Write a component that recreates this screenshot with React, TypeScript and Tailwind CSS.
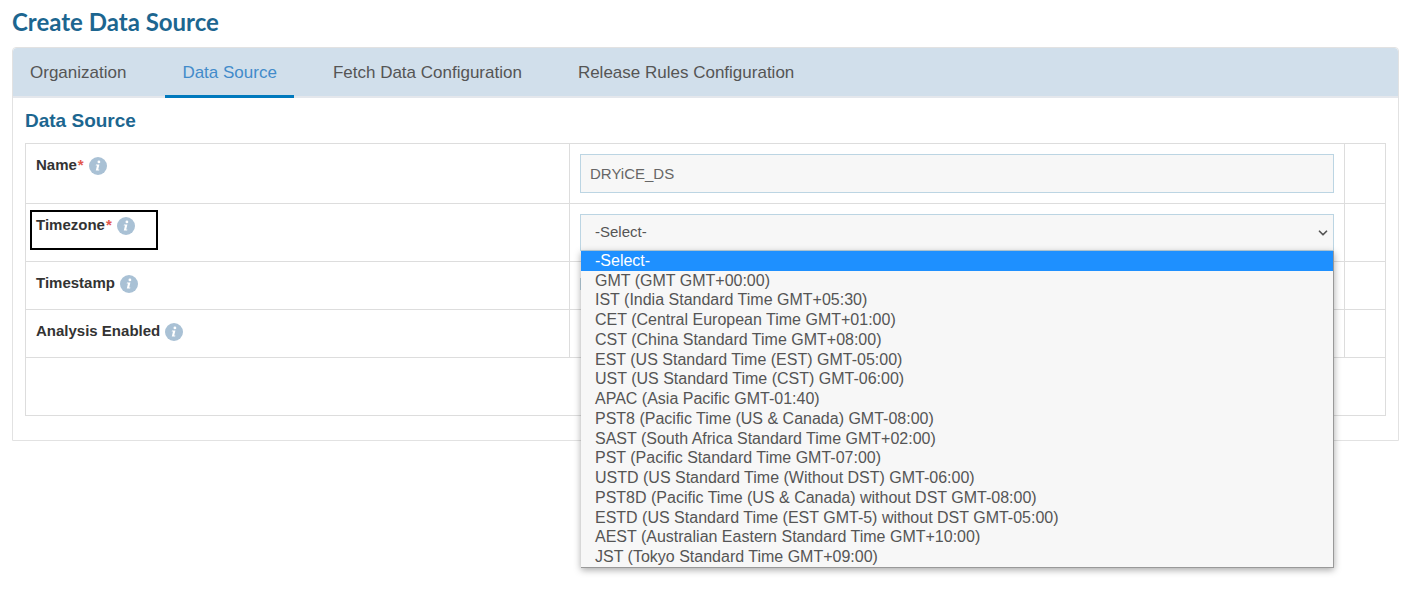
import { useState } from 'react'
import { ChevronDown } from 'lucide-react'

const tabs = [
  'Organization',
  'Data Source',
  'Fetch Data Configuration',
  'Release Rules Configuration'
]

const timezones = [
  '-Select-',
  'GMT (GMT GMT+00:00)',
  'IST (India Standard Time GMT+05:30)',
  'CET (Central European Time GMT+01:00)',
  'CST (China Standard Time GMT+08:00)',
  'EST (US Standard Time (EST) GMT-05:00)',
  'UST (US Standard Time (CST) GMT-06:00)',
  'APAC (Asia Pacific GMT-01:40)',
  'PST8 (Pacific Time (US & Canada) GMT-08:00)',
  'SAST (South Africa Standard Time GMT+02:00)',
  'PST (Pacific Standard Time GMT-07:00)',
  'USTD (US Standard Time (Without DST) GMT-06:00)',
  'PST8D (Pacific Time (US & Canada) without DST GMT-08:00)',
  'ESTD (US Standard Time (EST GMT-5) without DST GMT-05:00)',
  'AEST (Australian Eastern Standard Time GMT+10:00)',
  'JST (Tokyo Standard Time GMT+09:00)'
]

function InfoIcon() {
  return (
    <svg viewBox="0 0 18 18" className="mt-[3px] h-[18px] w-[18px] shrink-0" aria-hidden="true">
      <circle cx="9" cy="9" r="9" fill="#a9c1d5" />
      <circle cx="9.9" cy="4.9" r="1.4" fill="#fff" />
      <path d="M7 7.4h3.4l-1.2 5h1.2l-.3 1.2H6.8l1.2-5H6.7z" fill="#fff" />
    </svg>
  )
}

function FieldLabel({ htmlFor, text, required }: { htmlFor: string; text: string; required?: boolean }) {
  return (
    <div className="flex items-start gap-[5px]">
      <label htmlFor={htmlFor} className="pt-px text-[15px] leading-5 font-bold text-[#333]">
        {text}
        {required && <span className="ml-px text-[#e2574c]">*</span>}
      </label>
      <InfoIcon />
    </div>
  )
}

export default function App() {
  const [activeTab, setActiveTab] = useState('Data Source')
  const [name, setName] = useState('DRYiCE_DS')
  const [timezone, setTimezone] = useState('-Select-')

  return (
    <main className="min-h-screen bg-white pt-2 pr-[15px] pl-3 font-['Liberation_Sans',Arial,sans-serif] text-[#555]">
      <h1 className="font-[Lato,sans-serif] text-2xl leading-7 font-bold text-[#1c6690]">
        Create Data Source
      </h1>

      <section className="mt-[11px] rounded-t border border-[#e2e2e2]">
        <nav className="flex h-[50px] gap-[22px] rounded-t border-b-2 border-[#e4e7ec] bg-[#d1dfeb]">
          {tabs.map((tab) => (
            <button
              key={tab}
              type="button"
              onClick={() => setActiveTab(tab)}
              className={
                tab === activeTab
                  ? 'h-[50px] border-b-[3px] border-[#0079bd] px-[17px] pt-[2px] text-[17px] text-[#428bca]'
                  : 'h-[50px] border-b-[3px] border-transparent px-[17px] pt-[2px] text-[17px] text-[#555]'
              }
            >
              {tab}
            </button>
          ))}
        </nav>

        <div className="px-3 pt-[9px] pb-6">
          <h2 className="text-[19px] leading-7 font-bold text-[#1c6690]">Data Source</h2>

          <table className="mt-2 w-full table-fixed border-collapse border border-[#ddd] [&_td]:border [&_td]:border-[#ddd] [&_td]:p-[10px] [&_td]:align-top">
            <colgroup>
              <col className="w-[40%]" />
              <col className="w-[57%]" />
              <col className="w-[3%]" />
            </colgroup>
            <tbody>
              <tr>
                <td>
                  <FieldLabel htmlFor="name" text="Name" required />
                </td>
                <td>
                  <input
                    id="name"
                    type="text"
                    value={name}
                    onChange={(e) => setName(e.target.value)}
                    className="block h-[39px] w-full border border-[#bcd5e3] bg-[#f7f7f7] px-[9px] text-[15px] text-[#666] outline-none"
                  />
                </td>
                <td />
              </tr>
              <tr>
                <td className="relative">
                  <FieldLabel htmlFor="timezone" text="Timezone" required />
                  <div className="pointer-events-none absolute top-[6px] left-1 h-10 w-32 border-2 border-black" />
                </td>
                <td>
                  <div className="relative">
                    <select
                      id="timezone"
                      value={timezone}
                      onChange={(e) => setTimezone(e.target.value)}
                      className="block h-[37px] w-full appearance-none border border-[#bcd5e3] bg-[#f7f7f7] px-[14px] text-[15px] text-[#555] outline-none"
                    >
                      {timezones.map((zone) => (
                        <option key={zone}>{zone}</option>
                      ))}
                    </select>
                    <ChevronDown
                      className="pointer-events-none absolute top-3 right-1 h-[14px] w-[14px] text-[#555]"
                      strokeWidth={3}
                    />
                    <ul
                      role="listbox"
                      aria-label="Timezone"
                      className="absolute top-[37px] right-0 left-px z-10 grid h-[317px] auto-rows-fr border-r border-b border-[#999] bg-[#f7f7f7] text-base shadow-[0_2px_7px_rgba(0,0,0,0.35)]"
                    >
                      {timezones.map((zone) => (
                        <li
                          key={zone}
                          role="option"
                          aria-selected={zone === timezone}
                          onClick={() => setTimezone(zone)}
                          className={
                            zone === timezone
                              ? 'flex items-center bg-[#1e90ff] px-[14px] leading-4 text-white'
                              : 'flex items-center px-[14px] leading-4 text-[#555]'
                          }
                        >
                          {zone}
                        </li>
                      ))}
                    </ul>
                  </div>
                </td>
                <td />
              </tr>
              <tr className="h-12">
                <td>
                  <FieldLabel htmlFor="timestamp" text="Timestamp" />
                </td>
                <td>
                  <input
                    id="timestamp"
                    type="checkbox"
                    className="mt-[6px] block h-3 w-3 appearance-none border border-[#bcd5e3] bg-white"
                  />
                </td>
                <td />
              </tr>
              <tr className="h-12">
                <td>
                  <FieldLabel htmlFor="analysis" text="Analysis Enabled" />
                </td>
                <td>
                  <input id="analysis" type="checkbox" className="mt-[6px] ml-1 block h-3 w-3" />
                </td>
                <td />
              </tr>
              <tr className="h-[58px]">
                <td colSpan={3} />
              </tr>
            </tbody>
          </table>
        </div>
      </section>
    </main>
  )
}
